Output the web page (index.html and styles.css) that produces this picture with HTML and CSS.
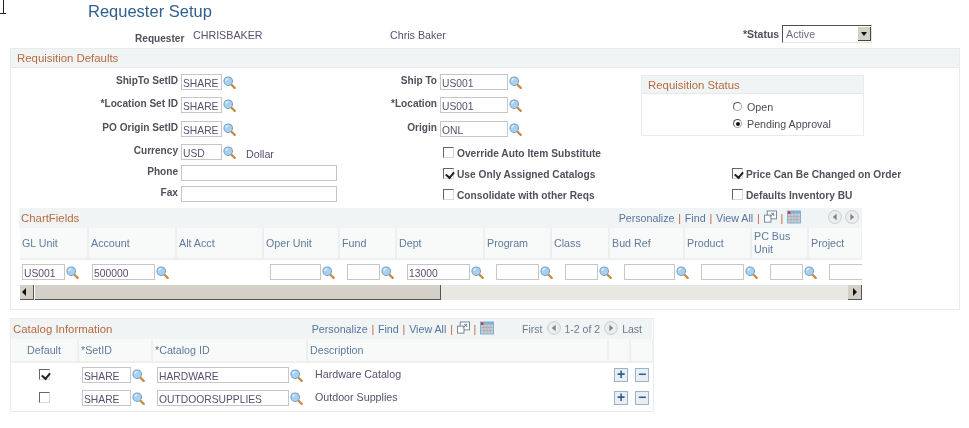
FILE: index.html
```html
<!DOCTYPE html>
<html lang="en">
<head>
<meta charset="utf-8">
<title>Requester Setup</title>
<link rel="stylesheet" href="styles.css">
</head>
<body>
<svg class="defs" width="0" height="0" aria-hidden="true">
  <symbol id="lens" viewBox="0 0 14 14">
    <path d="M8.6 8.8l4 4" stroke="#c98a3c" stroke-width="2.4" stroke-linecap="round" fill="none"/>
    <circle cx="5.6" cy="5.6" r="4.6" fill="#a9d0ee" stroke="#6f9fc6" stroke-width="1.1"/>
    <path d="M3 5.2a3 3 0 0 1 2.6-2.4" stroke="#eef7fd" stroke-width="1.2" fill="none"/>
  </symbol>
  <symbol id="popout" viewBox="0 0 14 14">
    <rect x="3.5" y="0.5" width="10" height="8.5" fill="#fff" stroke="#6f8192"/>
    <rect x="0.5" y="5" width="7" height="7.5" fill="#fff" stroke="#6f8192"/>
    <path d="M6 7l4-3.5M7.5 3h3v3" stroke="#6f8192" fill="none"/>
  </symbol>
  <symbol id="sheet" viewBox="0 0 14 13">
    <rect x="0" y="0" width="14" height="13" fill="#7fb0d8"/>
    <rect x="1" y="3" width="12" height="9" fill="#c8ccd2"/>
    <path d="M1 6h12M1 9h12M4 3v9M7 3v9M10 3v9" stroke="#a3a9b2" stroke-width=".7"/>
    <rect x="1" y="1" width="2.4" height="2.4" fill="#e0272c"/>
  </symbol>
  <symbol id="prev" viewBox="0 0 14 14">
    <circle cx="7" cy="7" r="6.4" fill="#eceeee" stroke="#c9cccc"/>
    <path d="M8.6 3.8v6.4L4.8 7z" fill="#7d8488"/>
  </symbol>
  <symbol id="next" viewBox="0 0 14 14">
    <circle cx="7" cy="7" r="6.4" fill="#eceeee" stroke="#c9cccc"/>
    <path d="M5.4 3.8v6.4L9.2 7z" fill="#7d8488"/>
  </symbol>
</svg>

<span class="ibeam" aria-hidden="true"></span>

<h1 class="title">Requester Setup</h1>

<div class="topline">
  <span class="lbl req-lbl">Requester</span>
  <span class="val req-id">CHRISBAKER</span>
  <span class="val req-name">Chris Baker</span>
  <span class="lbl status-lbl">*Status</span>
  <div class="select"><span class="select-text">Active</span><span class="select-btn"></span></div>
</div>

<section class="panel main-panel">
  <h2 class="sec-head">Requisition Defaults</h2>
  <div class="defaults">
    <label class="lbl f-lbl">ShipTo SetID</label>
    <div class="field"><input class="in w41" value="SHARE"><svg class="lens"><use href="#lens"/></svg></div>
    <label class="lbl f-lbl">Ship To</label>
    <div class="field"><input class="in w68" value="US001"><svg class="lens"><use href="#lens"/></svg></div>
    <div class="status-box">
      <h3 class="sec-head small">Requisition Status</h3>
      <label class="radio first"><input type="radio" name="rs"><span>Open</span></label>
      <label class="radio"><input type="radio" name="rs" checked><span>Pending Approval</span></label>
    </div>

    <label class="lbl f-lbl">*Location Set ID</label>
    <div class="field"><input class="in w41" value="SHARE"><svg class="lens"><use href="#lens"/></svg></div>
    <label class="lbl f-lbl">*Location</label>
    <div class="field"><input class="in w68" value="US001"><svg class="lens"><use href="#lens"/></svg></div>

    <label class="lbl f-lbl">PO Origin SetID</label>
    <div class="field"><input class="in w41" value="SHARE"><svg class="lens"><use href="#lens"/></svg></div>
    <label class="lbl f-lbl">Origin</label>
    <div class="field"><input class="in w68" value="ONL"><svg class="lens"><use href="#lens"/></svg></div>

    <label class="lbl f-lbl">Currency</label>
    <div class="field"><input class="in w41" value="USD"><svg class="lens"><use href="#lens"/></svg><span class="val dollar">Dollar</span></div>
    <label class="check wide"><input type="checkbox"><span>Override Auto Item Substitute</span></label>
    <div></div>

    <label class="lbl f-lbl">Phone</label>
    <div class="field"><input class="in w155"></div>
    <label class="check wide"><input type="checkbox" checked><span>Use Only Assigned Catalogs</span></label>
    <label class="check right"><input type="checkbox" checked><span>Price Can Be Changed on Order</span></label>

    <label class="lbl f-lbl">Fax</label>
    <div class="field"><input class="in w155"></div>
    <label class="check wide"><input type="checkbox"><span>Consolidate with other Reqs</span></label>
    <label class="check right"><input type="checkbox"><span>Defaults Inventory BU</span></label>
  </div>

  <div class="chart">
    <div class="bar">
      <h3 class="bar-title">ChartFields</h3>
      <nav class="tools">
        <a class="link">Personalize</a><i class="sep">|</i>
        <a class="link">Find</a><i class="sep">|</i>
        <a class="link">View All</a><i class="sep">|</i>
        <svg class="ico pop"><use href="#popout"/></svg><i class="sep">|</i>
        <svg class="ico"><use href="#sheet"/></svg>
        <svg class="ico nav1"><use href="#prev"/></svg>
        <svg class="ico nav2"><use href="#next"/></svg>
      </nav>
    </div>
    <table class="tbl chart-tbl">
      <colgroup>
        <col class="c68"><col class="c88"><col class="c87"><col class="c76"><col class="c57"><col class="c88"><col class="c67"><col class="c58"><col class="c75"><col class="c67"><col class="c57"><col class="c54">
      </colgroup>
      <thead>
        <tr class="h30"><th>GL Unit</th><th>Account</th><th>Alt Acct</th><th>Oper Unit</th><th>Fund</th><th>Dept</th><th>Program</th><th>Class</th><th>Bud Ref</th><th>Product</th><th>PC Bus<br>Unit</th><th>Project</th></tr>
      </thead>
      <tbody>
        <tr class="r26">
          <td class="p2"><div class="field"><input class="in w43" value="US001"><svg class="lens"><use href="#lens"/></svg></div></td>
          <td class="p4"><div class="field"><input class="in w63" value="500000"><svg class="lens"><use href="#lens"/></svg></div></td>
          <td></td>
          <td class="p7"><div class="field"><input class="in w51"><svg class="lens"><use href="#lens"/></svg></div></td>
          <td class="p8"><div class="field"><input class="in w33"><svg class="lens"><use href="#lens"/></svg></div></td>
          <td class="p11"><div class="field"><input class="in w63" value="13000"><svg class="lens"><use href="#lens"/></svg></div></td>
          <td class="p12"><div class="field"><input class="in w43"><svg class="lens"><use href="#lens"/></svg></div></td>
          <td class="p14"><div class="field"><input class="in w33"><svg class="lens"><use href="#lens"/></svg></div></td>
          <td class="p15"><div class="field"><input class="in w51"><svg class="lens"><use href="#lens"/></svg></div></td>
          <td class="p17"><div class="field"><input class="in w43"><svg class="lens"><use href="#lens"/></svg></div></td>
          <td class="p19"><div class="field"><input class="in w33"><svg class="lens"><use href="#lens"/></svg></div></td>
          <td class="p21"><div class="field"><input class="in w43"></div></td>
        </tr>
      </tbody>
    </table>
    <div class="scroll">
      <span class="sb-btn"><b class="arr-l"></b></span>
      <span class="sb-thumb"></span>
      <span class="sb-track"></span>
      <span class="sb-btn"><b class="arr-r"></b></span>
    </div>
  </div>
</section>

<section class="panel catalog">
  <div class="bar cat-bar">
    <h3 class="bar-title">Catalog Information</h3>
    <nav class="tools">
      <a class="link">Personalize</a><i class="sep">|</i>
      <a class="link">Find</a><i class="sep">|</i>
      <a class="link">View All</a><i class="sep">|</i>
      <svg class="ico pop"><use href="#popout"/></svg><i class="sep">|</i>
      <svg class="ico"><use href="#sheet"/></svg>
      <span class="pg first">First</span>
      <svg class="ico"><use href="#prev"/></svg>
      <span class="pg">1-2 of 2</span>
      <svg class="ico"><use href="#next"/></svg>
      <span class="pg">Last</span>
    </nav>
  </div>
  <table class="tbl cat-tbl">
    <colgroup>
      <col class="c67"><col class="c74"><col class="c155"><col class="c301"><col class="c22"><col class="c23">
    </colgroup>
    <thead>
      <tr class="h23"><th class="ctr">Default</th><th>*SetID</th><th>*Catalog ID</th><th>Description</th><th></th><th></th></tr>
    </thead>
    <tbody>
      <tr class="r24">
        <td class="ctr"><input class="cb" type="checkbox" checked></td>
        <td class="p4"><div class="field"><input class="in w48" value="SHARE"><svg class="lens"><use href="#lens"/></svg></div></td>
        <td class="p5"><div class="field"><input class="in w132" value="HARDWARE"><svg class="lens"><use href="#lens"/></svg></div></td>
        <td class="desc">Hardware Catalog</td>
        <td class="btn-add"><span class="rowbtn">+</span></td>
        <td class="btn-del"><span class="rowbtn">−</span></td>
      </tr>
      <tr class="r24">
        <td class="ctr"><input class="cb" type="checkbox"></td>
        <td class="p4"><div class="field"><input class="in w48" value="SHARE"><svg class="lens"><use href="#lens"/></svg></div></td>
        <td class="p5"><div class="field"><input class="in w132" value="OUTDOORSUPPLIES"><svg class="lens"><use href="#lens"/></svg></div></td>
        <td class="desc">Outdoor Supplies</td>
        <td class="btn-add"><span class="rowbtn">+</span></td>
        <td class="btn-del"><span class="rowbtn">−</span></td>
      </tr>
    </tbody>
  </table>
</section>
</body>
</html>
```
FILE: styles.css
```css
* { box-sizing: border-box; }
html, body { margin: 0; padding: 0; }
body {
  width: 969px;
  height: 428px;
  overflow: hidden;
  background: #fff;
  position: relative;
  font: 10.7px/13px "Liberation Sans", Arial, sans-serif;
  color: #5b4e6e;
  filter: blur(0.35px);
}
.defs { position: absolute; }

.ibeam {
  position: absolute;
  left: 0;
  top: 0;
  width: 6px;
  height: 14px;
  border-bottom: 1px solid #222;
}
.ibeam::before {
  content: "";
  position: absolute;
  left: 3px;
  top: 0;
  width: 1px;
  height: 13px;
  background: #222;
}

.title {
  margin: 0;
  padding: 1px 0 0 88px;
  height: 24px;
  font-size: 16.5px;
  line-height: 21px;
  font-weight: 400;
  color: #2f5f91;
}

.lbl { font-weight: 700; font-size: 10.1px; color: #50505c; }
.val { color: #5b4e6e; }

.topline {
  display: flex;
  height: 24px;
  align-items: flex-start;
}
.req-lbl { margin: 8px 0 0 135px; width: 58px; }
.req-id { margin-top: 5px; width: 197px; }
.req-name { margin-top: 5px; width: 353px; }
.status-lbl { margin-top: 4px; width: 39px; white-space: nowrap; font-size: 10.5px; }
.select {
  width: 90px;
  height: 18px;
  display: flex;
  justify-content: space-between;
  border: 1px solid #e4e4e0;
  border-top-color: #4f4f4f;
  border-left-color: #4f4f4f;
  padding: 1px 0 0 3px;
  color: #716a88;
  margin-top: 1px;
}
.select-text { line-height: 14px; }
.select-btn {
  width: 13px;
  height: 14px;
  background: #d4d0c8;
  border-right: 1px solid #444;
  border-bottom: 1px solid #444;
  position: relative;
}
.select-btn::after {
  content: "";
  position: absolute;
  left: 3px;
  top: 5px;
  border: 3.5px solid transparent;
  border-top: 4px solid #111;
  border-bottom: 0;
}

.panel { border: 1px solid #e9ecec; }
.main-panel {
  margin-left: 10px;
  width: 950px;
  height: 262px;
}
.sec-head {
  margin: 0;
  height: 19px;
  padding-left: 6px;
  background: #f1f4f4;
  border-bottom: 1px solid #e6e9e9;
  font-size: 11.4px;
  line-height: 18px;
  font-weight: 400;
  color: #b8693f;
}

.defaults {
  display: grid;
  grid-template-columns: 167px 159px 100px 204px 223px;
  grid-template-rows: 23px 24px 23px 21px 21px 22px;
  padding-top: 6px;
}
.f-lbl {
  text-align: right;
  line-height: 12px;
  padding-top: 1px;
}
.field {
  display: flex;
  align-items: flex-start;
  padding-left: 3px;
}
.in {
  display: block;
  height: 16px;
  padding: 2px 0 0 1px;
  margin: 0;
  border: 1px solid #c6c6c6;
  background: #fff;
  color: #5b4e6e;
  font: 10.3px/12px "Liberation Sans", Arial, sans-serif;
  outline: 0;
}
.w33 { width: 33px; }
.w41 { width: 41px; }
.w43 { width: 43px; }
.w48 { width: 49px; }
.w51 { width: 51px; }
.w63 { width: 63px; }
.w68 { width: 68px; }
.w132 { width: 132px; }
.w155 { width: 156px; }
.lens { width: 13px; height: 13px; margin: 2px 0 0 1px; flex: none; }
.dollar { margin: 4px 0 0 10px; }

.status-box {
  grid-column: 5;
  grid-row: 1 / span 3;
  margin-top: 1px;
  height: 61px;
  border: 1px solid #e9ecec;
}
.sec-head.small { height: 18px; }
.radio {
  display: flex;
  align-items: center;
  height: 17px;
  padding-left: 91px;
  color: #4c4c58;
}
.radio.first { margin-top: 5px; }
.radio input {
  appearance: none;
  width: 9px;
  height: 9px;
  margin: 0 5px 2px 0;
  border: 1px solid #a8a8a8;
  border-top-color: #555;
  border-left-color: #555;
  border-radius: 50%;
  background: #fff;
  position: relative;
}
.radio input:checked::after {
  content: "";
  position: absolute;
  left: 1.5px;
  top: 1.5px;
  width: 4px;
  height: 4px;
  border-radius: 50%;
  background: #111;
}

.check {
  display: flex;
  align-items: flex-start;
  font-weight: 700;
  font-size: 10.2px;
  color: #50505c;
  white-space: nowrap;
}
.check.wide { grid-column: 3 / span 2; padding-left: 106px; padding-top: 3px; }
.check.right { padding-left: 91px; padding-top: 3px; }
.check input, .cb {
  appearance: none;
  display: block;
  flex: none;
  width: 11px;
  height: 11px;
  margin: 0 3px 0 0;
  border: 1px solid #d8d8d8;
  border-top-color: #666;
  border-left-color: #666;
  background: #fff;
  position: relative;
}
.check input:checked::after, .cb:checked::after {
  content: "";
  position: absolute;
  left: 2.5px;
  top: 0.5px;
  width: 3.5px;
  height: 6px;
  border-right: 2px solid #222;
  border-bottom: 2px solid #222;
  transform: rotate(40deg);
}

.chart { margin-left: 8px; width: 843px; overflow: hidden; }
.bar {
  display: flex;
  align-items: center;
  height: 20px;
  background: #f1f4f4;
}
.bar-title {
  margin: 0;
  padding-left: 2px;
  font-size: 11.4px;
  font-weight: 400;
  color: #b8693f;
}
.tools {
  margin-left: auto;
  display: flex;
  align-items: center;
  padding-right: 3px;
}
.cat-bar .tools { padding-right: 6px; }
.link { color: #56759f; }
.sep { font-style: normal; color: #c0653f; margin: 0 3.8px; }
.ico { width: 14px; height: 14px; flex: none; margin-top: -3px; }
.ico.pop { width: 13px; }
.nav1 { margin-left: 27px; }
.nav2 { margin-left: 3px; }
.pg { color: #6a7a8c; margin: 0 4px; font-size: 10.5px; }
.pg.first { margin-left: 28px; }

.tbl {
  table-layout: fixed;
  border-collapse: collapse;
  width: 843px;
}
.chart-tbl { margin-left: 1px; }
.tbl th {
  padding: 0 0 0 2px;
  background: #f8f9f9;
  border-right: 2px solid #eef0f0;
  border-bottom: 2px solid #eef0f0;
  text-align: left;
  font-weight: 400;
  color: #5f7b9b;
  line-height: 13px;
}
.tbl th.ctr { text-align: center; padding: 0; }
.tbl td { padding: 0; vertical-align: top; }
.tbl td .field { padding: 4px 0 0 0; }
.c22 { width: 22px; } .c23 { width: 23px; }
.c54 { width: 54px; } .c57 { width: 57px; } .c58 { width: 58px; }
.c67 { width: 67px; } .c68 { width: 68px; } .c74 { width: 74px; }
.c75 { width: 75px; } .c76 { width: 76px; } .c87 { width: 87px; }
.c88 { width: 88px; } .c155 { width: 155px; } .c301 { width: 301px; }
.h30 { height: 31px; }
.h23 { height: 23px; }
.r26 { height: 26px; }
.r24 { height: 24px; }
.tbl .p2 { padding-left: 2px; } .tbl .p4 { padding-left: 4px; } .tbl .p5 { padding-left: 5px; }
.tbl .p7 { padding-left: 7px; } .tbl .p8 { padding-left: 8px; } .tbl .p11 { padding-left: 11px; }
.tbl .p12 { padding-left: 12px; } .tbl .p14 { padding-left: 14px; } .tbl .p15 { padding-left: 15px; }
.tbl .p17 { padding-left: 17px; } .tbl .p19 { padding-left: 19px; } .tbl .p21 { padding-left: 21px; overflow: hidden; }
.chart-tbl .p21 .in { min-width: 43px; }

.scroll {
  display: flex;
  height: 15px;
  margin-left: 1px;
}
.sb-btn {
  flex: none;
  width: 14px;
  background: #d4d0c8;
  border-right: 1px solid #555;
  border-bottom: 1px solid #555;
  position: relative;
}
.sb-thumb {
  flex: none;
  width: 406px;
  margin-left: 1px;
  background: #d4d0c8;
  border-right: 1px solid #555;
  border-bottom: 1px solid #555;
}
.sb-track { flex: 1; background: #e9e7e1; }
.arr-l, .arr-r {
  position: absolute;
  top: 3px;
  border: 4px solid transparent;
}
.arr-l { left: 2px; border-right: 4px solid #111; border-left: 0; }
.arr-r { left: 5px; border-left: 4px solid #111; border-right: 0; }

.catalog {
  margin: 8px 0 0 10px;
  width: 644px;
  height: 94px;
  padding-right: 1px;
}
.catalog .cat-bar { height: 20px; }
.cat-tbl { width: 642px; }
.cat-tbl .desc { padding: 5px 0 0 8px; line-height: 13px; }
.cat-tbl td.ctr { text-align: center; padding-top: 6px; }
.cat-tbl td.btn-add { padding: 5px 0 0 6px; }
.cat-tbl td.btn-del { padding: 5px 0 0 5px; }
.cb { display: inline-block; margin: 0; }
.rowbtn {
  display: block;
  width: 14px;
  height: 14px;
  border: 1px solid #9cb2c6;
  background: #e8eef3;
  color: #2d5f93;
  font: 700 14px/11px "Liberation Sans", Arial, sans-serif;
  text-align: center;
}
```
